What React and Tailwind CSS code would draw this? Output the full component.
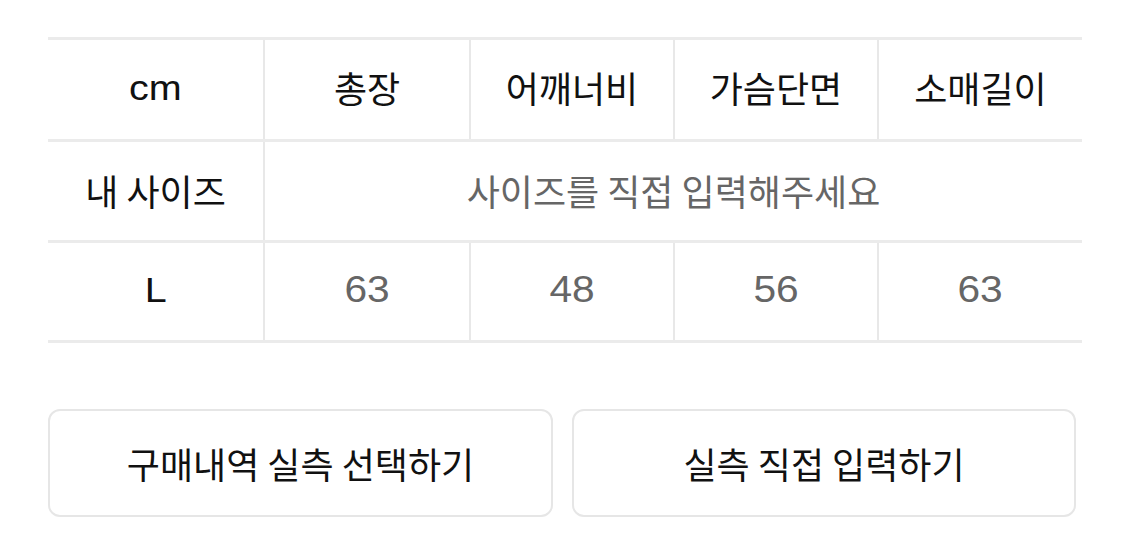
import React from "react";

const font = { fontFamily: '"Noto Sans CJK KR", "Noto Sans", sans-serif' };
const latin = { fontFamily: '"Liberation Sans", Arial, sans-serif' };

function Cell({ children, w, last, className = "" }) {
  return (
    <div
      className={`flex items-center justify-center ${w} ${last ? "" : "border-r-2 border-[#e8e8e8]"} ${className}`}
    >
      {children}
    </div>
  );
}

function Lat({ children }) {
  return (
    <span className="inline-block scale-x-[1.13]" style={latin}>
      {children}
    </span>
  );
}

export default function App() {
  const cols = ["w-[217px]", "w-[206px]", "w-[204px]", "w-[204px]", "w-[203px]"];
  const head = ["총장", "어깨너비", "가슴단면", "소매길이"];
  const vals = ["63", "48", "56", "63"];
  return (
    <div className="w-[1125px] h-[537px] bg-white pl-[48px] pt-[37px]" style={font}>
      <div className="w-[1034px] border-t-[3px] border-[#ebebeb]">
        <div className="flex h-[102px] border-b-[3px] border-[#ebebeb] text-[36px] text-[#111]">
          <Cell w={cols[0]} className="pb-[6px]">
            <span className="text-[35px]"><Lat>cm</Lat></span>
          </Cell>
          {head.map((h, i) => (
            <Cell key={h} w={cols[i + 1]} last={i === 3} className="pb-[6px]">{h}</Cell>
          ))}
        </div>
        <div className="flex h-[101px] border-b-[3px] border-[#ebebeb]">
          <Cell w={cols[0]} className="text-[36px] text-[#111] pb-[2px]">내 사이즈</Cell>
          <div className="flex flex-1 items-center justify-center text-[36px] text-[#666] pb-[2px]">
            사이즈를 직접 입력해주세요
          </div>
        </div>
        <div className="flex h-[100px] border-b-[3px] border-[#ebebeb]">
          <Cell w={cols[0]} className="text-[35px] text-[#111] pb-[2px]">
            <Lat>L</Lat>
          </Cell>
          {vals.map((v, i) => (
            <Cell key={i} w={cols[i + 1]} last={i === 3} className="text-[36px] text-[#666] pb-[4px]">
              <Lat>{v}</Lat>
            </Cell>
          ))}
        </div>
      </div>
      <div className="flex gap-[19px] mt-[66px]">
        <button className="w-[505px] h-[108px] rounded-[12px] border-2 border-[#e6e6e6] bg-white flex items-center justify-center text-[36px] text-[#111]">
          구매내역 실측 선택하기
        </button>
        <button className="w-[504px] h-[108px] rounded-[12px] border-2 border-[#e6e6e6] bg-white flex items-center justify-center text-[36px] text-[#111]">
          실측 직접 입력하기
        </button>
      </div>
    </div>
  );
}
